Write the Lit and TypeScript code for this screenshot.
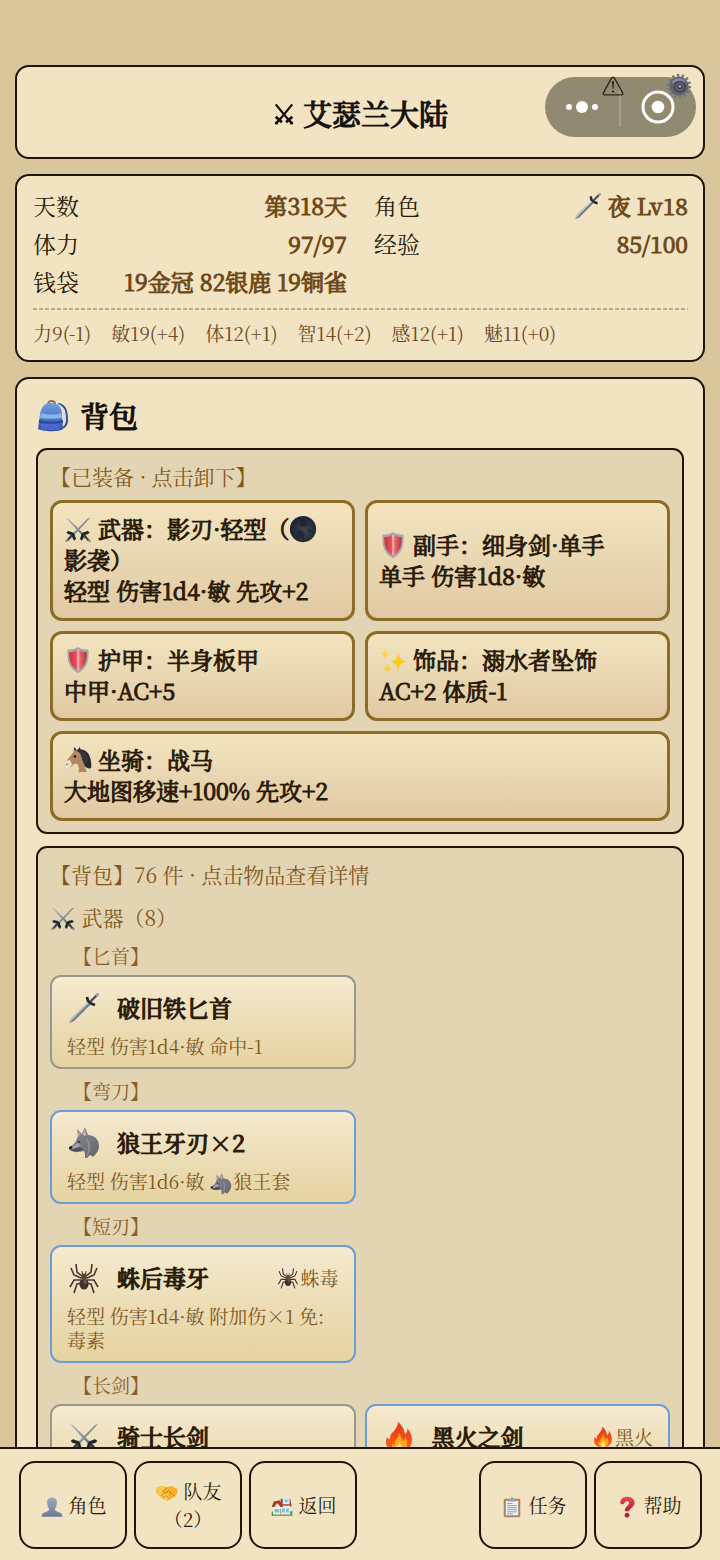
import { LitElement, html, css, svg, nothing } from "lit";
import { customElement, property } from "lit/decorators.js";

const defs = svg`
  <linearGradient id="steel" x1="0" y1="0" x2="1" y2="1"><stop offset="0" stop-color="#bcc4cb"/><stop offset="1" stop-color="#4f5962"/></linearGradient>
  <linearGradient id="blue" x1="0" y1="0" x2="0" y2="1"><stop offset="0" stop-color="#6f9fe0"/><stop offset="1" stop-color="#3250b4"/></linearGradient>
  <linearGradient id="shield" x1="0" y1="0" x2="1" y2="0"><stop offset="0" stop-color="#c9323c"/><stop offset=".42" stop-color="#e8555b"/><stop offset=".5" stop-color="#ffc9c4"/><stop offset=".6" stop-color="#ea6a6c"/><stop offset="1" stop-color="#b3343d"/></linearGradient>
  <linearGradient id="flame" x1="0" y1="0" x2="0" y2="1"><stop offset="0" stop-color="#e8341c"/><stop offset="1" stop-color="#f66a12"/></linearGradient>
  <linearGradient id="bust" x1="0" y1="0" x2="0" y2="1"><stop offset="0" stop-color="#9fa9be"/><stop offset="1" stop-color="#6c7a98"/></linearGradient>
  <linearGradient id="query" x1="0" y1="0" x2="0" y2="1"><stop offset="0" stop-color="#f0474c"/><stop offset="1" stop-color="#b81e34"/></linearGradient>
  <linearGradient id="fur" x1="0" y1="0" x2="1" y2="1"><stop offset="0" stop-color="#8b8d95"/><stop offset="1" stop-color="#64666f"/></linearGradient>
  <radialGradient id="moon" cx=".55" cy=".55" r=".6"><stop offset="0" stop-color="#42464e"/><stop offset=".7" stop-color="#23293a"/><stop offset="1" stop-color="#18202f"/></radialGradient>`;

const shapes: Record<string, unknown> = {
  swords: svg`
    <path d="M2 3 L5 4 L26 25 L24 27 Z" fill="url(#steel)"/><path d="M30 3 L27 4 L6 25 L8 27 Z" fill="url(#steel)"/>
    <path d="M4 19 C6 22 8 20 10 22 C12 24 10 26 13 28" fill="none" stroke="#20252b" stroke-width="3.400"/>
    <path d="M28 19 C26 22 24 20 22 22 C20 24 22 26 19 28" fill="none" stroke="#20252b" stroke-width="3.400"/>
    <path d="M9 23 L4 29 M23 23 L28 29" stroke="#3d434a" stroke-width="2.600"/>
    <circle cx="3" cy="29.500" r="1.600" fill="#8b9096"/><circle cx="29" cy="29.500" r="1.600" fill="#8b9096"/>`,
  crossed: svg`
    <g fill="none" stroke="#15110a"><path d="M4 2 L23 25 M28 2 L9 25" stroke-width="3.200"/><path d="M4 20 L13 28 M28 20 L19 28" stroke-width="4"/><path d="M9 24 L5 30 M23 24 L27 30" stroke-width="3.500"/></g>
    <circle cx="5" cy="29" r="2.400" fill="#15110a"/><circle cx="27" cy="29" r="2.400" fill="#15110a"/>`,
  dagger: svg`
    <path d="M1 31 L3 26 L21 9 L23.500 11.500 L6 29 Z" fill="#b9bfc4"/><path d="M1 31 L22 10 L23.500 11.500 L6 29 Z" fill="#757c83"/>
    <path d="M19 5 L20 9 L24 12 L27 13" fill="none" stroke="#22272c" stroke-width="2.800" stroke-linejoin="round"/>
    <path d="M22.500 9.500 L28.500 3.500" stroke="#4a5056" stroke-width="2.400"/><circle cx="29.300" cy="2.700" r="1.700" fill="#9a9fa4"/>`,
  backpack: svg`
    <path d="M11 4 C11 0 18 0 18 4" fill="none" stroke="#8a6a62" stroke-width="1.800"/>
    <path d="M21 4 C28 5 30 10 30 20 C30 24 29 26 26 28" fill="none" stroke="#3b4c82" stroke-width="2"/>
    <path d="M21 5 C27 8 28 13 27 24" fill="none" stroke="#d7dcec" stroke-width="2"/>
    <path d="M3 14 C5 5 8 3 14 3 C21 3 25 7 25 15 L26 29 C23 32 6 32 1 29 Z" fill="url(#blue)"/>
    <path d="M4 13 C11 15 18 15 24 13 L25 18 C17 19 10 19 3 18 Z" fill="#86b6e4"/>
    <path d="M2 20 C10 22 18 22 26 20 L26 23 C18 24 9 24 2 23 Z" fill="#2a489e"/>
    <path d="M4 24 L4 30 L22 30 L22 24Z" fill="#5570d0" opacity=".6"/>`,
  shield: svg`
    <path d="M16 1 C12 4 8 4 4 4 C3 17 6 26 16 31 C26 26 29 17 28 4 C24 4 20 4 16 1 Z" fill="#a5a7ac"/>
    <path d="M16 4 C13 6 9 7 6 7 C6 17 8 24 16 28 C24 24 26 17 26 7 C23 7 19 6 16 4 Z" fill="url(#shield)"/>`,
  sparkles: svg`
    <path d="M22 7 C23 14 25 16 31 18 C25 20 23 22 22 29 C21 22 19 20 13 18 C19 16 21 14 22 7Z" fill="#fdc921"/>
    <path d="M7 2 C8 7 9 8 13 9 C9 10 8 12 7 16 C6 12 5 10 1 9 C5 8 6 7 7 2Z" fill="#f9d45b"/>
    <path d="M10 20 C11 24 12 25 15 26 C12 27 11 28 10 31 C9 28 8 27 5 26 C8 25 9 24 10 20Z" fill="#fccf3c"/>`,
  moon: svg`<circle cx="16" cy="16" r="15" fill="url(#moon)"/><path d="M13 6 C18 4 22 9 19 13 C15 15 12 11 13 6 M9 18 C14 16 20 20 17 25 C12 27 8 23 9 18 M22 16 L26 18 L23 22 Z" fill="#111722" opacity=".5"/>`,
  horse: svg`
    <path d="M11 5 L12 1 L15 5 L18 1 L19 4 C27 4 32 12 31 25 C28 27 24 24 21 20 Z" fill="#2b2a30"/>
    <path d="M12 4 L17 7 C22 11 23 20 26 30 C22 30 19 29 17 31 C17 25 17 20 13 20 C10 21 8 25 5 25 C0 27 0 22 2 18 L10 8 Z" fill="#b18a62"/>
    <path d="M2 17 L7 16 L9 21 C7 25 4 26 2 25 C0 24 0 20 2 17Z" fill="#eee3d4"/>
    <path d="M17 5 C21 12 20 17 24 22 C28 20 28 14 25 9 C23 6 19 5 17 5Z" fill="#35353f"/>
    <circle cx="12.500" cy="12" r="1.400" fill="#15130f"/><circle cx="3.500" cy="21" r=".9" fill="#5d4c42"/>`,
  wolf: svg`
    <path d="M10 9 L9 2 L14 7 L17 0 L20 8 C27 8 31 13 31 19 C31 24 28 27 25 30 L22 28 L19 31 L17 31 C17 28 17 26 16 24 C12 25 7 26 4 24 C2 24 1 23 1 20 C4 19 6 17 8 14 Z" fill="url(#fur)"/>
    <path d="M10 9 L9.500 3 L13 8 Z" fill="#c3a0a6"/><path d="M17 2 L18.500 9 L14.500 8 Z" fill="#d3aab0"/>
    <path d="M3 23 L11 20 L16 22 C13 24 8 25 4 24 Z" fill="#4e5058"/><path d="M5 19 L10 16 L13 19 L5 22 Z" fill="#a0a1a8"/>
    <path d="M1 20 L4 19 L4 21.500 L1.500 22.500 Z" fill="#15161b"/><path d="M9.500 14.500 L12.500 14 L11 16 Z" fill="#1d1e24"/>
    <path d="M18 12 C21 17 21 23 18 30 C21 28 23 22 22 17 C21 13 20 12 18 12Z" fill="#9698a0" opacity=".7"/>`,
  spider: svg`
    <g fill="none" stroke="#47352b" stroke-width="1.600"><path d="M14 14 L9 10 L8 2 M13 16 L6 13 L3 6 M13 18 L6 18 L2 25 M14 21 L9 22 L6 31"/><path d="M18 14 L23 10 L24 2 M19 16 L26 13 L29 6 M19 18 L26 18 L30 25 M18 21 L23 22 L26 31"/></g>
    <ellipse cx="16" cy="22" rx="4.600" ry="5.500" fill="#46302a"/><ellipse cx="16" cy="15" rx="3" ry="3.400" fill="#5e4438"/><path d="M14.500 12 L14 9 M17.500 12 L18 9" stroke="#47352b"/>
    <ellipse cx="17" cy="20" rx="1.500" ry="2.500" fill="#8d7163" opacity=".6"/>`,
  fire: svg`
    <path d="M15 1 C20 5 21 9 22 13 C24 12 25 9 24 7 C29 12 30 19 28 24 C25 31 18 32 12 31 C5 30 1 24 4 16 C5 18 6 18 7 18 C7 13 9 12 11 10 C13 7 15 5 15 1Z" fill="url(#flame)"/>
    <path d="M16 12 C19 16 18 18 20 20 C21 19 22 18 22 16 C26 22 24 29 19 31 C13 32 8 29 9 22 C10 24 11 24 12 23 C11 19 16 17 16 12Z" fill="#fda422"/>
    <path d="M16 21 C20 25 20 28 18 31 C13 31 12 28 13 25 C15 25 16 24 16 21Z" fill="#ffe56b"/>`,
  bust: svg`<path d="M16 2 C21 2 24 6 23 11 C23 15 21 18 20 19 C20 22 24 23 27 24 C30 25 31 27 31 30 L1 30 C1 27 2 25 5 24 C8 23 12 22 12 19 C11 18 9 15 9 11 C8 6 11 2 16 2Z" fill="url(#bust)"/>`,
  handshake: svg`
    <path d="M1 8 L8 6 C11 5 14 7 16 8 C20 6 22 6 25 7 L31 10 C32 15 30 20 27 21 L19 26 C16 28 13 26 10 24 L2 18 C0 15 0 11 1 8Z" fill="#f7b024"/>
    <path d="M1 8 L8 6 C11 5 14 7 16 8 L10 15 C12 18 16 16 18 14 L27 21 L19 26 C16 28 13 26 10 24 L2 18Z" fill="#fdc64a"/>
    <path d="M16 8 L10 14 C11 18 15 16 18 13 L27 21 M18 17 L24 23 M15 20 L20 25 M7 20 L10 18 M10 23 L13 20" stroke="#bd7109" stroke-width="1.300" fill="none"/>`,
  house: svg`
    <path d="M1 29 L31 29 L31 22 C28 21 27 24 27 25 L4 25 C4 22 1 22 1 24Z" fill="#52934c"/>
    <path d="M15 15 L14 4 L28 4 L30 14 L28 16Z" fill="#9e4330"/><rect x="17" y="3" width="10" height="9" fill="#d9eef8"/>
    <rect x="3" y="14" width="25" height="13" fill="#f1ece0"/><path d="M1 16 L4 8 L13 6 L18 16 Z" fill="#9e3f2d"/><path d="M5 16 L9 10 L14 16Z" fill="#f3e6d8"/>
    <path d="M5 19 h7 v5 h-7z M16 18 h4 v6 h-4z M22 18 h4 v6 h-4z M20 5 h4 v4 h-4z" fill="#6cc6e2"/><path d="M14 18 v9 M3 28 h27" stroke="#b39b7b" stroke-width="1.500"/>`,
  clipboard: svg`
    <rect x="4" y="4" width="24" height="27" rx="2" fill="#a98465"/><rect x="7" y="7" width="18" height="21" fill="#eef1f5"/>
    <path d="M11 4 L14 4 L16 1 L18 4 L21 4 L22 8 L10 8Z" fill="#9aa1a9"/>
    <path d="M9 11 h8 M9 14 h14 M9 17 h14 M9 20 h14 M9 23 h14 M9 26 h8" stroke="#8690a0" stroke-width="1.300"/>`,
  question: svg`<path d="M6 9 C7 4 11 1 16 1 C22 1 27 4 27 10 C27 16 20 17 19 22 L13 22 C12 16 19 14 19 10 C19 6 13 6 12 11 C10 13 6 12 6 9Z" fill="url(#query)"/><circle cx="16" cy="28" r="3.500" fill="#b81e34"/>`,
  warning: svg`<path d="M16 3 C17 3 18 4 19 6 L30 26 C31 28 30 29 28 29 L4 29 C2 29 1 28 2 26 L13 6 C14 4 15 3 16 3Z" fill="none" stroke="#2b2317" stroke-width="1.800"/><path d="M14.500 9 L17.500 9 L16.700 20 L15.300 20Z" fill="#2b2317"/><circle cx="16" cy="24" r="1.600" fill="#2b2317"/>`,
  gear: svg`
    <circle cx="16" cy="16" r="12.500" fill="none" stroke="#757681" stroke-width="5" stroke-dasharray="2.700 2.910"/>
    <circle cx="16" cy="16" r="11.800" fill="#61636f"/><path d="M7 11 C11 5 20 5 24 10 L20 13 C16 10 12 10 8 13Z" fill="#8688a0"/><circle cx="17" cy="17" r="7.500" fill="#41434f"/>
    <circle cx="17" cy="17" r="4.500" fill="none" stroke="#6b6e80" stroke-width="1.500"/><circle cx="17" cy="16.500" r="1.600" fill="#a0a3b2"/>`,
};

const shared = css`
  * { box-sizing: border-box; }
  button { font: inherit; color: inherit; margin: 0; cursor: pointer; }
  .icon { display: inline-block; width: 28px; height: 28px; margin: -1px 0; vertical-align: -4px; }
  .icon svg { display: block; width: 100%; height: 100%; }
  .icon.small { width: 24px; height: 22px; }
  .icon.medium { width: 26px; height: 26px; }
  .icon.large { width: 34px; height: 32px; }
`;

const icon = (name: string, size = "") => html`<span class="icon ${size}" aria-hidden="true"><svg viewBox="0 0 32 32"><defs>${defs}</defs>${shapes[name]}</svg></span>`;

interface Item { icon: string; name: string; detail: unknown; tag?: string; tagIcon?: string; rare?: boolean; }

@customElement("item-card")
export class ItemCard extends LitElement {
  static styles = [shared, css`
    :host { display: block; }
    .card { display: flex; flex-direction: column; width: 100%; height: 100%; padding: 13px 15px 9px; text-align: left; color: #81591f; font-size: 19px; line-height: 24px; border: 2px solid #9c978c; border-radius: 11px; background: linear-gradient(#f6ead0, #ecddb6 50%, #e6d3a0); }
    .card.rare { border-color: #699fd6; }
    .head { display: flex; align-items: center; gap: 16px; width: 100%; height: 36px; margin-bottom: 8px; }
    .name { flex: 1; color: #2a1a08; font-size: 23px; font-weight: 500; -webkit-text-stroke: 1px currentColor; }
    .detail .icon { margin: -2px 0; }
    .tag { display: flex; align-items: center; }
  `];
  @property({ attribute: false }) item!: Item;
  render() {
    const i = this.item;
    return html`<button class="card ${i.rare ? "rare" : ""}">
      <span class="head">${icon(i.icon, "large")}<span class="name">${i.name}</span>${i.tag ? html`<span class="tag">${icon(i.tagIcon!, "small")}${i.tag}</span>` : nothing}</span>
      <span class="detail">${i.detail}</span>
    </button>`;
  }
}

const stats = [
  ["天数", "第318天", ""], ["角色", "夜 Lv18", "dagger"],
  ["体力", "97/97", ""], ["经验", "85/100", ""],
  ["钱袋", "19金冠 82银鹿 19铜雀", ""],
];
const attributes = ["力9(-1)", "敏19(+4)", "体12(+1)", "智14(+2)", "感12(+1)", "魅11(+0)"];
const equipment = [
  { icon: "swords", title: html`武器：影刃·轻型（${icon("moon")}<span class="keep">影袭）</span>`, detail: "轻型 伤害1d4·敏 先攻+2" },
  { icon: "shield", title: "副手：细身剑·单手", detail: "单手 伤害1d8·敏" },
  { icon: "shield", title: "护甲：半身板甲", detail: "中甲·AC+5" },
  { icon: "sparkles", title: "饰品：溺水者坠饰", detail: "AC+2 体质-1" },
  { icon: "horse", title: "坐骑：战马", detail: "大地图移速+100% 先攻+2", wide: true },
];
const groups: { name: string; items: Item[] }[] = [
  { name: "匕首", items: [{ icon: "dagger", name: "破旧铁匕首", detail: "轻型 伤害1d4·敏 命中-1" }] },
  { name: "弯刀", items: [{ icon: "wolf", name: "狼王牙刃×2", detail: html`轻型 伤害1d6·敏 ${icon("wolf", "small")}狼王套`, rare: true }] },
  { name: "短刃", items: [{ icon: "spider", name: "蛛后毒牙", detail: "轻型 伤害1d4·敏 附加伤×1 免:毒素", tag: "蛛毒", tagIcon: "spider", rare: true }] },
  { name: "长剑", items: [
    { icon: "swords", name: "骑士长剑", detail: "单手 伤害1d8·力" },
    { icon: "fire", name: "黑火之剑", detail: "单手 伤害1d8·力", tag: "黑火", tagIcon: "fire", rare: true },
  ] },
];
const nav = [
  { icon: "bust", label: "角色" }, { icon: "handshake", label: "队友", count: "（2）" }, { icon: "house", label: "返回" },
  null,
  { icon: "clipboard", label: "任务" }, { icon: "question", label: "帮助" },
];

@customElement("app-root")
export class AppRoot extends LitElement {
  static styles = [shared, css`
    :host { display: flex; flex-direction: column; height: 100vh; overflow: hidden; color: #2a1a08; background: #d9c69b; font-family: "Noto Serif CJK SC", "Noto Serif SC", "Source Han Serif SC", "Noto Sans CJK SC", serif; font-size: 23px; font-weight: 400; }
    main { flex: 1; min-height: 0; overflow-y: auto; scrollbar-width: none; display: flex; flex-direction: column; gap: 15px; padding: 65px 15px 0; }
    .sheet { flex: none; background: #f2e4c2; border: 2px solid #1f1609; border-radius: 14px; }
    .top { position: relative; display: flex; align-items: center; justify-content: center; min-height: 94px; padding-top: 4px; }
    h1, h2, h3, h4, dl, dd, dt, ul { margin: 0; padding: 0; font-weight: inherit; }
    h1, h2 { display: flex; align-items: center; color: #15110a; font-size: 29px; line-height: 40px; font-weight: 500; -webkit-text-stroke: 1px currentColor; }
    h1 { gap: 7px; }
    .capsule { position: absolute; top: 10px; right: 7px; display: flex; align-items: center; width: 151px; height: 60px; padding-right: 1px; border-radius: 30px; background: #928971; }
    .capsule button { flex: 1; display: grid; place-items: center; height: 60px; padding: 0; border: 0; background: none; }
    .capsule .split { width: 2px; height: 40px; background: #a79f88; }
    .corner { position: absolute; z-index: 1; padding: 0; border: 0; background: none; }
    .corner .icon { display: block; margin: 0; }
    .corner.warn { top: 8px; right: 78px; }
    .corner.gear { top: 6px; right: 11px; }
    .status { padding: 11px 15px 11px 16px; }
    .stats { display: grid; grid-template-columns: 1fr 1fr; column-gap: 27px; }
    .stat { display: flex; justify-content: space-between; line-height: 38px; white-space: nowrap; }
    .stat dd { color: #6e4817; -webkit-text-stroke: 1px currentColor; }
    .attrs { display: flex; flex-wrap: wrap; column-gap: 20px; margin-top: 7px; padding-top: 9px; background: repeating-linear-gradient(90deg, #bfad87 0 4px, transparent 4px 6px) top / 100% 2px no-repeat; list-style: none; color: #6b4b26; font-size: 19px; line-height: 32px; }
    .bag { padding: 17px 19px 20px; }
    .bag h2 { gap: 10px; margin-bottom: 12px; }
    .panel { padding: 11px 12px; border: 2px solid #1f1609; border-radius: 11px; background: #e3d5b3; }
    .panel + .panel { margin-top: 12px; }
    .panel h3 { color: #81591f; font-size: 21px; line-height: 30px; }
    .equip { display: grid; grid-template-columns: 1fr 1fr; gap: 10px; margin-top: 9px; }
    .slot { padding: 10px 11px 12px; min-width: 0; text-align: left; line-height: 31px; -webkit-text-stroke: 1px currentColor; border: 3px solid #8b6d27; border-radius: 12px; background: linear-gradient(#f3e4be, #e9d7b2 50%, #e0c9a2); }
    .slot.wide { grid-column: 1 / -1; }
    .keep { white-space: nowrap; }
    .panel h3.section { margin: 13px 0 10px; }
    h4 { padding-left: 23px; margin-top: 8px; color: #8a5f2e; font-size: 19px; line-height: 28px; }
    h3.section + h4 { margin-top: 0; }
    .items { display: grid; grid-template-columns: 1fr 1fr; gap: 9px; margin-top: 5px; }
    nav { flex: none; display: grid; grid-template-columns: repeat(6, 1fr); gap: 7px; padding: 12px 18px 11px 19px; background: #f2e4c2; border-top: 2px solid #1f1609; }
    .tab { min-height: 88px; padding: 0; border: 2px solid #1f1609; border-radius: 16px; background: transparent; font-size: 19px; line-height: 28px; }
    .tab .count { display: block; }
  `];
  render() {
    return html`
      <main>
        <header class="sheet top">
          <h1>${icon("crossed", "small")}艾瑟兰大陆</h1>
          <div class="capsule">
            <button aria-label="更多"><svg width="36" height="14" viewBox="0 0 36 14" fill="#fff"><circle cx="5" cy="7" r="3"/><circle cx="18" cy="7" r="6"/><circle cx="31" cy="7" r="3"/></svg></button>
            <span class="split"></span>
            <button aria-label="关闭"><svg width="34" height="34" viewBox="0 0 34 34"><circle cx="17" cy="17" r="15" fill="none" stroke="#fff" stroke-width="3"/><circle cx="17" cy="17" r="6.300" fill="#fff"/></svg></button>
          </div>
          <button class="corner warn" aria-label="警告">${icon("warning", "small")}</button>
          <button class="corner gear" aria-label="设置">${icon("gear", "medium")}</button>
        </header>
        <section class="sheet status">
          <dl class="stats">${stats.map(([k, v, i]) => html`<div class="stat"><dt>${k}</dt><dd>${i ? html`${icon(i)} ` : nothing}${v}</dd></div>`)}</dl>
          <ul class="attrs">${attributes.map((a) => html`<li>${a}</li>`)}</ul>
        </section>
        <section class="sheet bag">
          <h2>${icon("backpack", "large")}背包</h2>
          <div class="panel">
            <h3>【已装备 · 点击卸下】</h3>
            <div class="equip">${equipment.map((e) => html`<button class="slot ${e.wide ? "wide" : ""}">${icon(e.icon)} ${e.title}<br>${e.detail}</button>`)}</div>
          </div>
          <div class="panel">
            <h3>【背包】76 件 · 点击物品查看详情</h3>
            <h3 class="section">${icon("swords", "medium")} 武器（8）</h3>
            ${groups.map((g) => html`<h4>【${g.name}】</h4><div class="items">${g.items.map((i) => html`<item-card .item=${i}></item-card>`)}</div>`)}
          </div>
        </section>
      </main>
      <nav>${nav.map((n) => n ? html`<button class="tab">${icon(n.icon, "small")} ${n.label}${n.count ? html`<span class="count">${n.count}</span>` : nothing}</button>` : html`<span></span>`)}</nav>`;
  }
}
